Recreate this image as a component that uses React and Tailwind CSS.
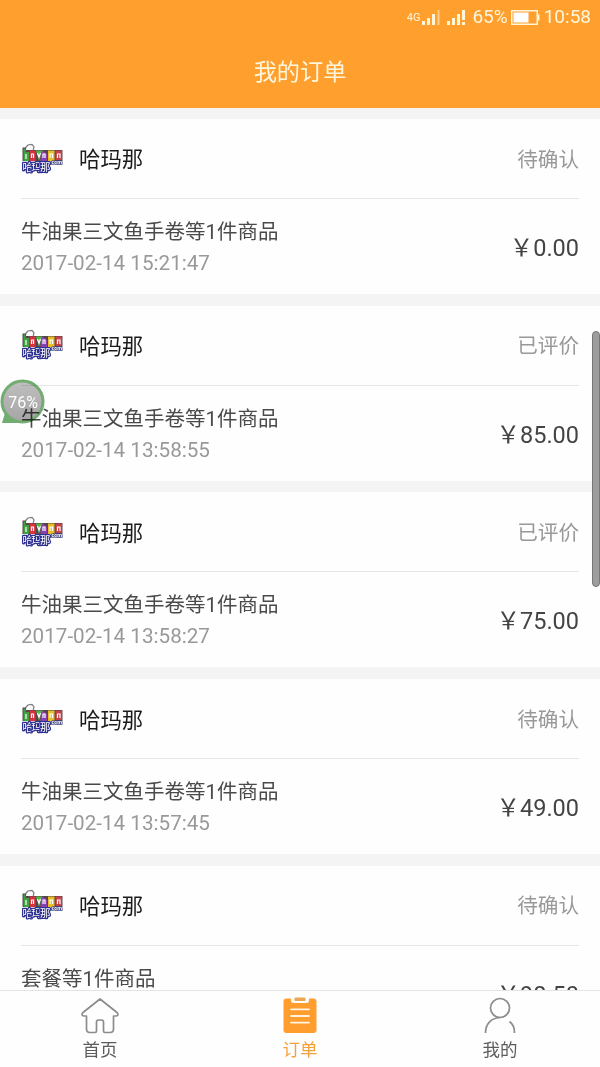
const orders = [
  { id: 1, status: "待确认", title: "牛油果三文鱼手卷等1件商品", time: "2017-02-14 15:21:47", price: "0.00" },
  { id: 2, status: "已评价", title: "牛油果三文鱼手卷等1件商品", time: "2017-02-14 13:58:55", price: "85.00" },
  { id: 3, status: "已评价", title: "牛油果三文鱼手卷等1件商品", time: "2017-02-14 13:58:27", price: "75.00" },
  { id: 4, status: "待确认", title: "牛油果三文鱼手卷等1件商品", time: "2017-02-14 13:57:45", price: "49.00" },
  { id: 5, status: "待确认", title: "套餐等1件商品", time: "2017-02-14 13:56:32", price: "98.50" },
];

const SignalIcon = ({ last }) => (
  <svg width="19" height="15" viewBox="0 0 19 15" fill="#fff6d8">
    <rect x="0" y="11" width="3" height="4" />
    <rect x="5" y="8" width="3" height="7" />
    <rect x="10" y="4" width="3" height="11" />
    {last === "alert" ? (
      <path d="M15 0h3v10h-3zM15 12h3v3h-3z" />
    ) : (
      <rect x="15.5" y="0" width="2" height="15" opacity="0.55" />
    )}
  </svg>
);

const BatteryIcon = () => (
  <svg width="29" height="15" viewBox="0 0 29 15">
    <rect x="0.75" y="0.75" width="25.5" height="13.5" fill="none" stroke="#fff6d8" strokeWidth="1.5" />
    <rect x="2.5" y="2.5" width="15" height="10" fill="#fff" />
    <rect x="26.5" y="4.5" width="2" height="6" fill="#fff6d8" />
  </svg>
);

const StoreLogo = () => (
  <svg width="42" height="32" viewBox="0 0 42 32" className="shrink-0">
    {/* chef hat */}
    <path d="M4 8 5 4 7 2 11 1.5l2 2.5-1 4z" fill="#fff" stroke="#7a7880" strokeWidth="1.2" />
    {/* colour letter band */}
    <path d="M1.500 4.500H5V7h36.500v11H1.500z" fill="#54464b" />
    <path d="M2.500 5.500h2V9H8v9H2.500z" fill="#3fa23f" />
    <path d="M8.500 7.500h6V18h-6z" fill="#d8323f" />
    <path d="M15 7.500h6.500L18 18z" fill="#54b544" />
    <path d="M19.500 18v-7l2.500-3.500 4 3.500v7z" fill="#8b41ad" />
    <path d="M27 7.500h6.500V18H27z" fill="#e8be25" />
    <path d="M34.500 7.500h6.500V17h-6.500z" fill="#c8404a" />
    <path
      d="M5 11v5M10.500 15v-4h2v4M16.500 10l1.500 4 1.500-4M22 15v-4h2v4M29 15v-4h2.500v4M36.500 15v-4H39v4"
      fill="none"
      stroke="#fff"
      strokeWidth="1.2"
    />
    <text x="29" y="21" fontSize="5.5" fontWeight="700" fill="#fff" stroke="#3a3c78" strokeWidth="1.6" paintOrder="stroke" textLength="12">
      .com
    </text>
    <text
      x="1.5"
      y="28"
      fontSize="10.5"
      fill="#fff"
      stroke="#2f3190"
      strokeWidth="2.6"
      strokeLinejoin="round"
      paintOrder="stroke"
      textLength="28"
    >
      哈玛那
    </text>
  </svg>
);

const HomeIcon = () => (
  <svg width="40" height="38" viewBox="0 0 40 38" fill="none" stroke="#8c8c8c" strokeWidth="1.7" strokeLinejoin="round">
    <path d="M20 2 37 15.5Q39.5 18.5 36 19H33.5V32Q33.5 35.5 30 35.5H25Q23.5 35.5 23.5 34V25Q23.5 23 21.5 23H18.5Q16.5 23 16.5 25V34Q16.5 35.5 15 35.5H10Q6.5 35.5 6.5 32V19H4Q.5 18.5 3 15.5Z" />
  </svg>
);

const OrderIcon = () => (
  <svg width="40" height="38" viewBox="0 0 40 38">
    <path d="M6.5 1.5H11V3.5Q11 6 14 6H26Q29 6 29 3.5V1.5H33.5Q36.5 1.5 36.5 4.5V33Q36.5 36 33.5 36H6.5Q3.5 36 3.5 33V4.5Q3.5 1.5 6.5 1.5Z" fill="#ff9d2e" />
    <rect x="14.5" y="0.5" width="11" height="3.5" rx="1" fill="#eca552" />
    <path d="M11 12.3h18M11 19h18M11 25.7h18" stroke="#fff4df" strokeWidth="1.8" strokeLinecap="round" />
  </svg>
);

const UserIcon = () => (
  <svg width="40" height="38" viewBox="0 0 40 38" fill="none" stroke="#8c8c8c" strokeWidth="1.7">
    <circle cx="20" cy="11" r="9.5" />
    <path d="M20 20.5C11 21 5.5 27 5.5 36M29.5 24.5C33 27 34.5 31 34.5 36" />
  </svg>
);

const tabs = [
  { key: "home", label: "首页", icon: <HomeIcon /> },
  { key: "orders", label: "订单", icon: <OrderIcon /> },
  { key: "me", label: "我的", icon: <UserIcon /> },
];

const OrderCard = ({ order }) => (
  <div className="h-[175px] shrink-0 bg-[#fefefe] px-[21px]">
    <div className="flex h-[80px] items-center border-b border-[#e6e6e6]">
      <StoreLogo />
      <span className="ml-4 pt-1 text-[21.4px] text-[#1c1c1c]">哈玛那</span>
      <span className="ml-auto pt-[3px] text-[20.6px] text-[#999]">{order.status}</span>
    </div>
    <div className="flex h-[95px] items-center justify-between">
      <div className="flex flex-col pt-px">
        <span className="text-[20.5px] leading-8 text-[#4a4a4a]">{order.title}</span>
        <span className="text-[20.65px] leading-[30px] text-[#999]">{order.time}</span>
      </div>
      <span className="pt-1 text-[23.5px] text-[#444]">￥{order.price}</span>
    </div>
  </div>
);

export default function App() {
  const activeTab = "orders";

  return (
    <div className="relative flex h-[1067px] w-[600px] flex-col overflow-hidden bg-[#f4f4f4] font-['Roboto','Noto_Sans_CJK_SC',sans-serif]">
      {/* Header */}
      <header className="h-[108px] shrink-0 bg-[#ff9f2e] text-[#fff6dc]">
        <div className="flex h-[35px] items-center justify-end pr-[9px]">
          <span className="pt-0.5 pr-[2px] text-[11px]">4G</span>
          <SignalIcon />
          <span className="w-[6px]" />
          <SignalIcon last="alert" />
          <span className="ml-[6px] mr-[3px] text-[19px]">65%</span>
          <BatteryIcon />
          <span className="ml-[4px] text-[19px]">10:58</span>
        </div>
        <h1 className="flex h-[73px] items-center justify-center pt-px text-[23.2px]">我的订单</h1>
      </header>

      {/* Order list */}
      <main className="flex min-h-0 flex-1 flex-col gap-[11.7px] overflow-hidden pt-[11px]">
        {orders.map((order) => (
          <OrderCard key={order.id} order={order} />
        ))}
      </main>

      {/* Tab bar */}
      <nav className="grid h-[77px] shrink-0 grid-cols-3 border-t border-[#e4e4e4] bg-[#fefefe]">
        {tabs.map((tab) => (
          <button key={tab.key} className="flex flex-col items-center pt-1.5">
            {tab.icon}
            <span
              className={`mt-[3px] text-[17.5px] leading-6 ${
                tab.key === activeTab ? "text-[#f5a13a]" : "text-[#5c5c5c]"
              }`}
            >
              {tab.label}
            </span>
          </button>
        ))}
      </nav>

      {/* Scrollbar */}
      <div className="absolute right-0 top-[331px] h-[256px] w-2 rounded-full border border-[#777] bg-[#9d9d9d]" />

      {/* Floating memory bubble, the list stays readable through it */}
      <div className="absolute left-0 top-[379px] h-[46px] w-[46px]">
        <svg width="46" height="46" viewBox="0 0 46 46" className="absolute inset-0 mix-blend-multiply">
          <defs>
            <linearGradient id="bubble" x1="0" y1="0" x2="0" y2="1">
              <stop offset="0" stopColor="#c0c0c0" />
              <stop offset="1" stopColor="#a6a6a6" />
            </linearGradient>
          </defs>
          <path d="M5 34 2 44H22z" fill="#72ad70" />
          <circle cx="22.5" cy="22.5" r="20.5" fill="url(#bubble)" stroke="#72ad70" strokeWidth="3" />
        </svg>
        <span className="absolute inset-x-0 top-[12px] text-center text-[16px] leading-6 text-white">76%</span>
      </div>
    </div>
  );
}
